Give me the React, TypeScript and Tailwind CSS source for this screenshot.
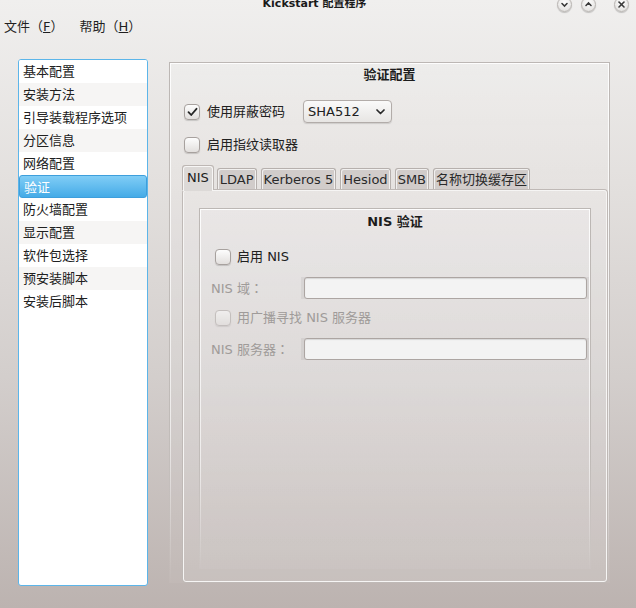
import React from 'react';
import clsx from 'clsx';

const pages = [
  '基本配置',
  '安装方法',
  '引导装载程序选项',
  '分区信息',
  '网络配置',
  '验证',
  '防火墙配置',
  '显示配置',
  '软件包选择',
  '预安装脚本',
  '安装后脚本',
];

const tabs = ['LDAP', 'Kerberos 5', 'Hesiod', 'SMB', '名称切换缓存区'];

// round window buttons in the title bar
const WinButton: React.FC<{ kind: 'min' | 'max' | 'close'; className?: string }> = ({ kind, className }) => (
  <div
    className={clsx(
      'w-[15px] h-[15px] rounded-full border border-[#b9b5b2] bg-[radial-gradient(circle_at_50%_35%,#ffffff,#dcdad8)] shadow-[0_1px_1px_rgba(0,0,0,0.2)] flex items-center justify-center',
      className
    )}
  >
    <svg width="9" height="9" viewBox="0 0 9 9" fill="none" stroke="#3a3a3a" strokeWidth="1.6" strokeLinecap="round">
      {kind === 'min' && <polyline points="2,3.5 4.5,6 7,3.5" />}
      {kind === 'max' && <polyline points="2,5.5 4.5,3 7,5.5" />}
      {kind === 'close' && (
        <>
          <line x1="2" y1="2" x2="7" y2="7" />
          <line x1="7" y1="2" x2="2" y2="7" />
        </>
      )}
    </svg>
  </div>
);

const CheckBox: React.FC<{ checked?: boolean; disabled?: boolean }> = ({ checked, disabled }) => (
  <div
    className={clsx(
      'w-[16px] h-[16px] shrink-0 rounded-[4px] border border-[#a7a19e] bg-[linear-gradient(to_bottom,#fdfdfd,#e2dfdd)] shadow-[0_1px_1px_rgba(0,0,0,0.15)] flex items-center justify-center',
      disabled && 'opacity-50'
    )}
  >
    {checked && (
      <svg width="11" height="10" viewBox="0 0 11 10" fill="none" stroke="#262626" strokeWidth="1.8" strokeLinecap="round" strokeLinejoin="round">
        <polyline points="1.5,5.2 4.2,8 9.5,1.8" />
      </svg>
    )}
  </div>
);

// Oxygen style group box: top border with side lines fading out downwards
const GroupBox: React.FC<{ title: string; className?: string; titleClass?: string; children: React.ReactNode }> = ({
  title,
  className,
  titleClass,
  children,
}) => (
  <div
    className={clsx(
      'border border-b-0 [border-image:linear-gradient(to_bottom,#bcb7b4,#c0bbb8_70%,rgba(190,185,182,0))_1] bg-[linear-gradient(to_bottom,rgba(255,255,255,0.12),rgba(255,255,255,0.04))]',
      className
    )}
  >
    <div className="h-full flex flex-col border border-b-0 [border-image:linear-gradient(to_bottom,rgba(255,255,255,0.9),rgba(255,255,255,0.6)_70%,rgba(255,255,255,0))_1]">
      <div className={clsx('text-center font-bold leading-[16px] text-[#1c1c1c]', titleClass)}>{title}</div>
      {children}
    </div>
  </div>
);

const TextField: React.FC = () => (
  <div className="flex-1 pl-[3px] pr-[2px] bg-black/5">
    <div className="h-[22px] rounded-[3px] border border-[#aca5a2] bg-[#f3f3f3] shadow-[inset_0_1px_1px_rgba(0,0,0,0.12)]" />
  </div>
);

// full-width colon centred in its cell, as in the reference font
const Colon: React.FC = () => <span className="font-['Noto_Sans_CJK_TC',sans-serif]">：</span>;

const App: React.FC = () => {
  return (
    <div className="w-[636px] h-[608px] overflow-hidden flex flex-col text-[13px] text-[#202020] font-['DejaVu_Sans','Noto_Sans_CJK_SC',sans-serif] bg-[linear-gradient(to_bottom,#f0efee_0%,#e3e0de_30%,#d3cecc_62%,#bcb3b0_100%)]">
      {/* title bar */}
      <div className="h-[14px] shrink-0 flex items-start overflow-hidden">
        <div className="flex-1" />
        <div className="-mt-[3px] text-[11px] font-bold leading-[14px] text-[#1a1a1a]">Kickstart 配置程序</div>
        <div className="flex-1 flex justify-end items-start pr-[7px] -mt-[3px]">
          <WinButton kind="min" />
          <WinButton kind="max" className="ml-[9px]" />
          <WinButton kind="close" className="ml-[18px]" />
        </div>
      </div>

      {/* menu bar */}
      <div className="h-[26px] shrink-0 flex items-center pl-[4px] gap-[16px] text-[#1f1f1f]">
        <span>
          文件（<span className="underline">F</span>）
        </span>
        <span>
          帮助（<span className="underline">H</span>）
        </span>
      </div>

      <div className="flex-1 flex items-start pt-[19px]">
        {/* page list */}
        <div className="ml-[18px] w-[130px] h-[527px] shrink-0 rounded-[3px] border border-[#5cb5e9] bg-white flex flex-col overflow-hidden">
          {pages.map((p, i) => (
            <div
              key={p}
              className={clsx(
                'h-[23px] shrink-0 px-[4px] leading-[23px] whitespace-nowrap',
                i === 5
                  ? 'rounded-[3px] border border-[#3e9fdc] bg-[linear-gradient(to_bottom,#80cdf6,#45abe7)] text-white leading-[21px]'
                  : i % 2 === 1
                  ? 'bg-[#f6f5f4]'
                  : 'bg-white'
              )}
            >
              {p}
            </div>
          ))}
        </div>

        {/* authentication group */}
        <GroupBox title="验证配置" className="ml-[21px] mt-[3px] w-[441px] h-[521px]" titleClass="pt-[3px]">
          <div className="mt-[17px] h-[23px] pl-[13px] flex items-center">
            <CheckBox checked />
            <span className="ml-[7px]">使用屏蔽密码</span>
            <div className="ml-[18px] w-[89px] h-[23px] rounded-[4px] border border-[#b2aca9] bg-[linear-gradient(to_bottom,#fafafa,#e7e5e3)] shadow-[0_1px_1px_rgba(0,0,0,0.12)] flex items-center pl-[4px] pr-[6px]">
              <span className="flex-1">SHA512</span>
              <svg width="9" height="6" viewBox="0 0 9 6" fill="none" stroke="#2a2a2a" strokeWidth="1.7" strokeLinecap="round" strokeLinejoin="round">
                <polyline points="1,1 4.5,4.5 8,1" />
              </svg>
            </div>
          </div>

          <div className="mt-[14px] h-[16px] leading-[16px] pl-[13px] flex items-center">
            <CheckBox />
            <span className="ml-[7px]">启用指纹读取器</span>
          </div>

          {/* tab strip */}
          <div className="mt-[13px] h-[24px] shrink-0 pl-[12px] flex items-end gap-[4px]">
            <div className="relative z-10 -mb-[1px] h-[25px] px-[3px] rounded-t-[3px] border border-b-0 border-[#f7f6f5] bg-[#dcd9d7] shadow-[-1px_-1px_0_#bdb7b4,1px_-1px_0_#bdb7b4] leading-[22px]">
              NIS
            </div>
            {tabs.map(t => (
              <div
                key={t}
                className="h-[22px] px-[2px] pt-[1px] rounded-t-[3px] border border-b-0 border-[#b6b0ad] bg-[#d1ccca] shadow-[inset_1px_1px_0_rgba(255,255,255,0.7),inset_-1px_0_0_rgba(255,255,255,0.7)] leading-[20px] whitespace-nowrap text-[#2a2a2a]"
              >
                {t}
              </div>
            ))}
          </div>

          {/* tab pane */}
          <div className="ml-[12px] mr-[1px] mb-[1px] flex-1 flex flex-col rounded-[3px] border border-[#f6f5f4] shadow-[0_0_0_1px_#bfb9b6] bg-white/10 pt-[17px] px-[15px] pb-[12px]">
            <GroupBox title="NIS 验证" className="flex-1" titleClass="pt-[4px]">
              <div className="mt-[19px] h-[16px] leading-[16px] pl-[14px] flex items-center">
                <CheckBox />
                <span className="ml-[6px]">启用 NIS</span>
              </div>

              <div className="mt-[12px] h-[22px] pl-[10px] flex items-center">
                <span className="w-[90px] shrink-0 text-[#9f9b99]">
                  NIS 域<Colon />
                </span>
                <TextField />
              </div>

              <div className="mt-[11px] h-[16px] leading-[16px] pl-[14px] flex items-center">
                <CheckBox disabled />
                <span className="ml-[6px] text-[#9f9b99]">用广播寻找 NIS 服务器</span>
              </div>

              <div className="mt-[12px] h-[22px] pl-[10px] flex items-center">
                <span className="w-[90px] shrink-0 text-[#9f9b99]">
                  NIS 服务器<Colon />
                </span>
                <TextField />
              </div>
            </GroupBox>
          </div>
        </GroupBox>
      </div>
    </div>
  );
};

export default App;
